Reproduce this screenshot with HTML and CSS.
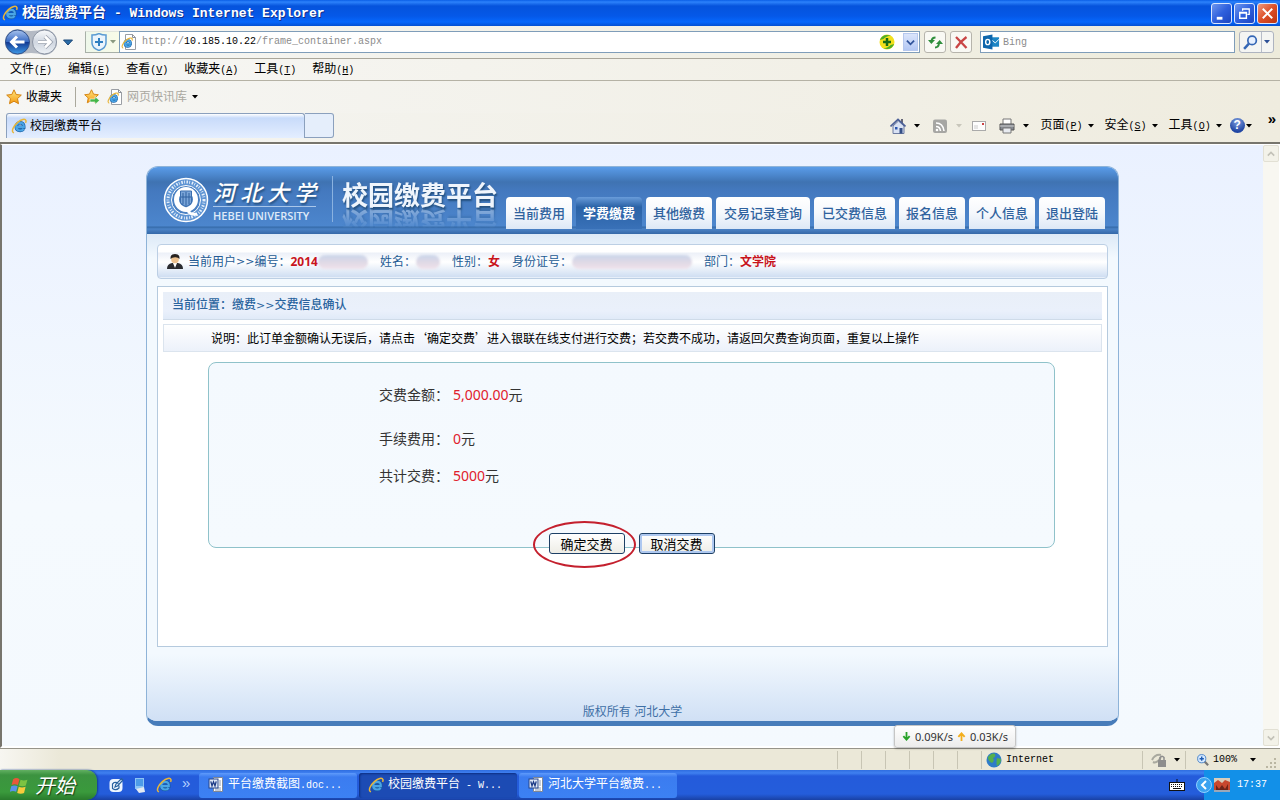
FILE: index.html
```html
<!DOCTYPE html>
<html lang="zh-CN">
<head>
<meta charset="utf-8">
<title>校园缴费平台 - Windows Internet Explorer</title>
<link rel="stylesheet" href="styles.css">
</head>
<body>
<svg class="defs" aria-hidden="true">
  <defs>
    <linearGradient id="gBlue" x1="0" y1="0" x2="0" y2="1"><stop offset="0" stop-color="#7cc8f5"/><stop offset="1" stop-color="#1a6cc4"/></linearGradient>
    <linearGradient id="gBack" x1="0" y1="0" x2="0" y2="1"><stop offset="0" stop-color="#a9c4ee"/><stop offset=".48" stop-color="#3a6cc4"/><stop offset=".52" stop-color="#123a94"/><stop offset="1" stop-color="#3f9be8"/></linearGradient>
    <linearGradient id="gFwd" x1="0" y1="0" x2="0" y2="1"><stop offset="0" stop-color="#fafbfc"/><stop offset=".5" stop-color="#cfd6e0"/><stop offset="1" stop-color="#eef2f6"/></linearGradient>
    <linearGradient id="gStar" x1="0" y1="0" x2="0" y2="1"><stop offset="0" stop-color="#ffe680"/><stop offset="1" stop-color="#f59a10"/></linearGradient>
    <symbol id="ie" viewBox="0 0 16 16">
      <path d="M5.500 9.200h7.300c.2-3-1.200-4.400-3.600-4.400-2.400 0-4 1.600-4 3.800 0 2.400 1.500 3.900 4 3.900 1.600 0 2.700-.6 3.400-1.700" fill="none" stroke="#175a9e" stroke-width="3.400"/>
      <path d="M5.500 9.200h7.300c.2-3-1.200-4.400-3.600-4.400-2.400 0-4 1.600-4 3.800 0 2.400 1.500 3.900 4 3.900 1.600 0 2.700-.6 3.400-1.700" fill="none" stroke="#4aa5e6" stroke-width="2.200"/>
      <path d="M3 14.900c-3.400-1-.6-7 3.700-10.600C10.200 1.300 14.200.5 14.900 2.400c.3.900.1 1.600-.4 2.400" fill="none" stroke="#e8b63a" stroke-width="1.500"/>
    </symbol>
    <symbol id="iepage" viewBox="0 0 16 16">
      <path d="M4.500.5h7l3 3v12h-10z" fill="#fff" stroke="#9a9ea4"/><path d="M11.500.5v3h3" fill="none" stroke="#8b8f96"/>
      <use href="#ie" x="0" y="3" width="12" height="12"/>
    </symbol>
    <symbol id="star" viewBox="0 0 16 16"><path d="M8 .8l2.200 4.700 5.100.6-3.800 3.500 1 5.100L8 12.200l-4.500 2.500 1-5.100L.7 6.100l5.100-.6z" fill="url(#gStar)" stroke="#d48311"/></symbol>
    <symbol id="word" viewBox="0 0 16 16">
      <path d="M5.500.5h9v14h-9z" fill="#fff" stroke="#7f8794"/><path d="M11 4h2M11 6h2M11 8h2M7 11h6M7 13h6" stroke="#8998b0"/>
      <rect x="1" y="2" width="9" height="9" fill="#dfe7f6" stroke="#26478d"/><path d="M2.800 4.300l1.200 4.500 1.500-4 1.500 4 1.200-4.500" fill="none" stroke="#1c3a86" stroke-width="1.300"/>
    </symbol>
    <symbol id="down" viewBox="0 0 6 4"><path d="M0 0h6L3 3.500z" fill="currentColor"/></symbol>
  </defs>
</svg>

<header class="titlebar">
  <svg class="i16"><use href="#ie"/></svg>
  <h1>校园缴费平台 <span class="mono">- Windows Internet Explorer</span></h1>
  <div class="winbtns">
    <button type="button" class="win" aria-label="最小化"><svg viewBox="0 0 20 20"><path d="M5 15h6" stroke="#fff" stroke-width="3"/></svg></button>
    <button type="button" class="win" aria-label="还原"><svg viewBox="0 0 20 20"><path d="M8 7V5h7v6h-2M8 5.500h7" fill="none" stroke="#fff" stroke-width="1.300"/><path d="M5 9h7v6H5zM5 9.500h7" fill="none" stroke="#fff" stroke-width="1.500"/></svg></button>
    <button type="button" class="win close" aria-label="关闭"><svg viewBox="0 0 20 20"><path d="M5 5l10 10M15 5L5 15" stroke="#fff" stroke-width="2"/></svg></button>
  </div>
</header>

<div class="navrow">
  <svg class="backfwd" viewBox="0 0 54 28">
    <path d="M14 1q13 4 26 0a13 13 0 0 1 0 26q-13-4-26 0a13 13 0 0 1 0-26z" fill="#b4bac4"/>
    <circle cx="13.500" cy="14" r="12" fill="url(#gBack)" stroke="#32528c"/><circle cx="40.500" cy="14" r="12" fill="url(#gFwd)" stroke="#8a93a2"/>
    <path d="M20.500 14H8M13 8.500L7.500 14l5.500 5.500" fill="none" stroke="#fff" stroke-width="3"/>
    <path d="M34 14h12M41 8.500l5.500 5.500-5.500 5.500" fill="none" stroke="#98a0ac" stroke-width="4"/><path d="M34 14h12M41 8.500l5.500 5.500-5.500 5.500" fill="none" stroke="#fff" stroke-width="2.500"/>
  </svg>
  <svg class="histarrow" viewBox="0 0 10 7"><path d="M.5 1h9L5 6z" fill="#2a6ca8" stroke="#1c4878"/></svg>
  <div class="shield">
    <svg viewBox="0 0 16 18"><path d="M1 2q4 0 7-1.500Q11 2 15 2v8q0 5-7 7.500Q1 15 1 10z" fill="#eaf4fc" stroke="#5b9bd2" stroke-width="1.500"/><path d="M8 5v8M4 9h8" stroke="#2f7fc0" stroke-width="2"/></svg>
    <svg class="caret"><use href="#down"/></svg>
  </div>
  <div class="address">
    <svg class="i16"><use href="#iepage"/></svg>
    <div class="url mono" role="textbox" aria-label="地址">http://<b>10.185.10.22</b>/frame_container.aspx</div>
    <svg class="i16" viewBox="0 0 16 16"><circle cx="8" cy="8" r="7.500" fill="#f3e01c"/><path d="M.8 6Q4-1 12 1.700 7 2 4.500 5zM15.200 10q-3 7-11 4.300 5-.3 7.500-3.300z" fill="#4fae28"/><path d="M8 4v8M4 8h8" stroke="#176b17" stroke-width="2.500"/></svg>
    <button type="button" class="drop" aria-label="展开地址"><svg viewBox="0 0 10 10"><path d="M1 3l4 4 4-4" fill="none" stroke="#31549b" stroke-width="2"/></svg></button>
  </div>
  <button type="button" class="tool" aria-label="刷新"><svg viewBox="0 0 16 16"><path d="M8.500 3.500Q5 3.500 4.500 7M8 13.500q3.500 0 4-4" fill="none" stroke="#2f8f3c" stroke-width="2"/><path d="M1 6h7L4.300 10zM9 10l3.700-4L16 10z" fill="#2f8f3c"/></svg></button>
  <button type="button" class="tool" aria-label="停止"><svg viewBox="0 0 16 16"><path d="M3 3q5 5 10.500 11M13.500 3Q8 7 3 14" fill="none" stroke="#c94545" stroke-width="2.300"/></svg></button>
  <div class="search">
    <svg viewBox="0 0 18 16"><path d="M8 3h9v10H8z" fill="#1d86c5"/><path d="M9.500 6l3.500 3 4-4" fill="none" stroke="#fff"/><path d="M0 2l10-2v16L0 14z" fill="#0f67ad"/><ellipse cx="5" cy="8" rx="2.200" ry="2.800" fill="none" stroke="#fff" stroke-width="1.500"/></svg>
    <input type="text" class="mono" placeholder="Bing" aria-label="Bing">
  </div>
  <div class="searchbtns">
    <button type="button" aria-label="搜索"><svg viewBox="0 0 16 16"><circle cx="9.500" cy="6" r="4" fill="#e6f0ff" stroke="#3567b5" stroke-width="1.600"/><path d="M6.500 9L2 14" stroke="#3567b5" stroke-width="2.300"/></svg></button>
    <button type="button" class="narrow" aria-label="搜索选项"><svg class="caret"><use href="#down"/></svg></button>
  </div>
</div>

<nav class="menurow" aria-label="菜单">
  <a href="#">文件<span class="mono">(<u>F</u>)</span></a>
  <a href="#">编辑<span class="mono">(<u>E</u>)</span></a>
  <a href="#">查看<span class="mono">(<u>V</u>)</span></a>
  <a href="#">收藏夹<span class="mono">(<u>A</u>)</span></a>
  <a href="#">工具<span class="mono">(<u>T</u>)</span></a>
  <a href="#">帮助<span class="mono">(<u>H</u>)</span></a>
</nav>

<div class="favrow">
  <svg class="i16"><use href="#star"/></svg><a href="#">收藏夹</a>
  <span class="vsep"></span>
  <svg class="i16" viewBox="0 0 16 16"><use href="#star" width="15" height="15"/><path d="M6 10h5V7.500l4.500 4-4.500 4V13H6z" fill="#43b649" stroke="#fff" stroke-width=".6"/></svg>
  <svg class="i16 feed"><use href="#iepage"/></svg>
  <a href="#" class="muted">网页快讯库</a><svg class="caret"><use href="#down"/></svg>
</div>

<div class="tabrow">
  <div class="tab"><svg class="i16"><use href="#ie"/></svg>校园缴费平台</div>
  <button type="button" class="newtab" aria-label="新选项卡"></button>
  <div class="cmdbar">
    <svg class="i16" viewBox="0 0 16 16"><path d="M11 1h2v4h-2z" fill="#667"/><path d="M3 8v7.500h11V8L8.500 3z" fill="#d9e2f4" stroke="#6d7ba0"/><path d="M.5 8.500L8 1.500l7.500 7" fill="none" stroke="#4a5f96" stroke-width="1.700"/><path d="M5 9h2.500v2.500H5z" fill="#2b57b0"/><path d="M9.500 10h3v5.500h-3z" fill="#344f86"/></svg>
    <svg class="caret"><use href="#down"/></svg>
    <svg class="i16 rss" viewBox="0 0 16 16"><rect x="1" y="1.500" width="14" height="13.500" rx="2" fill="#a6a6a3"/><path d="M4 5q7 0 8 8M4 8.500q4 0 4.500 4.500" fill="none" stroke="#fff" stroke-width="1.600"/><circle cx="5" cy="12" r="1.300" fill="#fff"/></svg>
    <svg class="caret pale"><use href="#down"/></svg>
    <svg class="i16 mail" viewBox="0 0 16 16"><rect x="1.500" y="3.500" width="13" height="9" fill="#fdfdfd" stroke="#aaa"/><path d="M3 10h4M3 8h4" stroke="#ccc"/><rect x="11" y="5" width="2" height="2" fill="#c44"/></svg>
    <svg class="i16 print" viewBox="0 0 16 16"><path d="M4 1h8v6H4z" fill="#fff" stroke="#777"/><path d="M1 6h14v6H1z" fill="#858a92" stroke="#555"/><path d="M4 10h8v5H4z" fill="#e8ebf0" stroke="#777"/><path d="M1 8h14" stroke="#ccc"/></svg>
    <svg class="caret"><use href="#down"/></svg>
    <a href="#" class="cmd"><span>页面<span class="mono">(<u>P</u>)</span></span><svg class="caret"><use href="#down"/></svg></a>
    <a href="#" class="cmd"><span>安全<span class="mono">(<u>S</u>)</span></span><svg class="caret"><use href="#down"/></svg></a>
    <a href="#" class="cmd"><span>工具<span class="mono">(<u>O</u>)</span></span><svg class="caret"><use href="#down"/></svg></a>
    <button type="button" class="help" aria-label="帮助"><span>?</span><svg class="caret"><use href="#down"/></svg></button>
    <span class="more">»</span>
  </div>
</div>

<div class="viewport">
  <main class="canvas">
    <div class="portal">
      <div class="banner">
        <svg class="crest" viewBox="0 0 46 46" aria-label="河北大学校徽">
          <circle cx="23" cy="23" r="21.500" fill="#5f95d4" stroke="#fff" stroke-width="1.500"/>
          <circle cx="23" cy="23" r="18" fill="none" stroke="#e6effa" stroke-width="3" stroke-dasharray="1.500 1.300 .8 1.700"/>
          <circle cx="23" cy="23" r="14.500" fill="#4a80c2" stroke="#fff" stroke-width="1"/>
          <ellipse cx="23" cy="22.500" rx="9.500" ry="10" fill="none" stroke="#fff" stroke-width="5"/>
          <path d="M17.500 14h11v12l-5.500 4-5.500-4z" fill="#7aa5d8" stroke="#3b6eae"/><path d="M20 16v11M23 15v14M26 16v11M18 20h10" stroke="#2e609f"/>
          <path d="M18 31q6 1 8 4t8 2" fill="none" stroke="#fff" stroke-width="3"/>
        </svg>
        <div class="univ"><span class="cn">河北大学</span><span class="en">HEBEI UNIVERSITY</span></div>
        <div class="platform"><span>校园缴费平台</span></div>
        <nav class="tabs">
          <a href="#">当前费用</a>
          <a href="#" class="on">学费缴费</a>
          <a href="#">其他缴费</a>
          <a href="#" class="wide">交易记录查询</a>
          <a href="#" class="wide">已交费信息</a>
          <a href="#">报名信息</a>
          <a href="#">个人信息</a>
          <a href="#">退出登陆</a>
        </nav>
      </div>
      <div class="content">
        <div class="userbar">
          <svg class="i16" viewBox="0 0 16 16"><path d="M0 15q0-5 5-6h6q5 1 5 6z" fill="#2b2b2f"/><path d="M6 9h4l-2 5z" fill="#fff"/><circle cx="8" cy="5.500" r="3.800" fill="#eec28f"/><path d="M3.500 5Q3 0 8 0t4.500 5Q11 3 8 3.200T3.500 5z" fill="#26211f"/></svg>
          <span class="who">当前用户<span class="gt">&gt;&gt;</span>编号：<b>2014</b><i class="blot w50"></i></span>
          <span>姓名：<i class="blot w24"></i></span>
          <span>性别：<b>女</b></span>
          <span>身份证号：<i class="blot w120"></i></span>
          <span>部门：<b>文学院</b></span>
        </div>
        <section class="panel">
          <h2>当前位置：缴费<span class="gt">&gt;&gt;</span>交费信息确认</h2>
          <p class="note">说明：此订单金额确认无误后，请点击‘确定交费’进入银联在线支付进行交费；若交费不成功，请返回欠费查询页面，重复以上操作</p>
          <form class="order">
            <dl>
              <div class="first"><dt>交费金额：</dt><dd><em>5,000.00</em>元</dd></div>
              <div><dt>手续费用：</dt><dd><em>0</em>元</dd></div>
              <div><dt>共计交费：</dt><dd><em>5000</em>元</dd></div>
            </dl>
            <div class="actions">
              <span class="marked"><button type="button">确定交费</button></span>
              <button type="button" class="focus">取消交费</button>
            </div>
          </form>
        </section>
        <footer>版权所有 河北大学</footer>
      </div>
    </div>
  </main>
  <div class="scroll" aria-hidden="true">
    <span><svg viewBox="0 0 10 10"><path d="M1 7l4-4 4 4" fill="none" stroke="#c3c2b8" stroke-width="2"/></svg></span>
    <span><svg viewBox="0 0 10 10"><path d="M1 3l4 4 4-4" fill="none" stroke="#c3c2b8" stroke-width="2"/></svg></span>
  </div>
  <div class="speed">
    <svg viewBox="0 0 10 10"><path d="M5 0v8M1.500 4.500L5 8.500l3.500-4" fill="none" stroke="#28a228" stroke-width="2"/></svg><span>0.09K/s</span>
    <svg viewBox="0 0 10 10"><path d="M5 10V2M1.500 5.500L5 1.500l3.500 4" fill="none" stroke="#f3ae1c" stroke-width="2"/></svg><span>0.03K/s</span>
  </div>
</div>

<div class="status">
  <span class="cell"></span><span class="cell"></span><span class="cell"></span><span class="cell"></span><span class="cell"></span><span class="cell"></span>
  <span class="cell zone"><svg class="i16" viewBox="0 0 16 16"><circle cx="8" cy="8" r="7.500" fill="#2f7cc8"/><path d="M2 5q4-5 7-3 1 3-2 4 2 3-1 5-4-2-4-6zM11 6l4 1q0 5-4 7-1-3 0-8z" fill="#55b04d"/></svg><span class="mono">Internet</span></span>
  <span class="cell lock"><svg class="i16" viewBox="0 0 16 16"><path d="M1 8q3-6 9-5M2 10q4 2 8-5" fill="none" stroke="#a9a99f" stroke-width="2"/><path d="M7 8h8v7H7z" fill="#8d8d8d"/><path d="M9 8V5.500q2-2.500 4 0V8" fill="none" stroke="#8d8d8d" stroke-width="1.500"/></svg><svg class="caret"><use href="#down"/></svg></span>
  <span class="cell zoomcell"><svg viewBox="0 0 14 14"><path d="M8 8l5 5" stroke="#777" stroke-width="2.500"/><circle cx="5.500" cy="5.500" r="4.800" fill="#d6e9ff" stroke="#3a78c4"/><path d="M5.500 3v5M3 5.500h5" stroke="#1c5cb4" stroke-width="1.600"/></svg><span class="mono">100%</span><svg class="caret"><use href="#down"/></svg>
  <svg class="grip" viewBox="0 0 12 12"><path d="M9 1h2v2H9zM5 5h2v2H5zM9 5h2v2H9zM1 9h2v2H1zM5 9h2v2H5zM9 9h2v2H9z" fill="#bab6a2"/></svg></span>
</div>

<div class="taskbar">
  <button type="button" class="start"><svg viewBox="0 0 18 18"><path d="M3 3q3-2 6 0L7.500 8.500q-3-1.500-6 0z" fill="#e8583a"/><path d="M10 3.500q3 1.500 6.500 0L15 9q-3 1.500-6.500 0z" fill="#7cc342"/><path d="M1.200 9.700q3-1.500 6 0L5.800 15q-3-1.500-6 0z" fill="#5a92ea"/><path d="M8.300 10.200q3 1.500 6.500 0L13.300 16q-3 1.500-6.500 0z" fill="#f8cb3c"/></svg>开始</button>
  <div class="quick">
    <svg class="i16" viewBox="0 0 16 16"><rect x="1.500" y="2" width="13" height="13" rx="4" fill="#eef6ff"/><path d="M10.500 6.500Q9 5 6 5.500L4.500 7v4.500Q8 14 11 11V8.500M7 10l1-3 5.500-5.500 1.500 1.500L9.500 9z" fill="none" stroke="#28629f" stroke-width="1.200"/></svg>
    <svg class="i16" viewBox="0 0 16 16"><path d="M3 1h9v11H3z" fill="#8cc4f5"/><path d="M4 2h7v7H4z" fill="#4d9be8"/><path d="M4 12l8-2 1 5-6 1z" fill="#e4eaf2"/></svg>
    <svg class="i16"><use href="#ie"/></svg>
    <span>»</span>
  </div>
  <div class="tasks">
    <button type="button"><svg class="i16"><use href="#word"/></svg><span>平台缴费截图<span class="mono">.doc...</span></span></button>
    <button type="button" class="active"><svg class="i16"><use href="#ie"/></svg><span>校园缴费平台<span class="mono"> - W...</span></span></button>
    <button type="button"><svg class="i16"><use href="#word"/></svg><span>河北大学平台缴费<span class="mono">...</span></span></button>
  </div>
  <svg class="i16 kbd" viewBox="0 0 16 16"><path d="M8 5V2" stroke="#111"/><rect x=".5" y="5.500" width="15" height="8" fill="#fff" stroke="#111"/><path d="M2 7.500h12M2 9.500h12" stroke="#111" stroke-dasharray="1 1"/><path d="M4 11.500h8" stroke="#111"/></svg>
  <div class="tray">
    <svg class="i16" viewBox="0 0 16 16"><circle cx="8" cy="8" r="7.500" fill="#3aa2f0" stroke="#8fd0ff"/><path d="M10 4L6 8l4 4" fill="none" stroke="#fff" stroke-width="2"/></svg>
    <svg class="i16" viewBox="0 0 16 16"><path d="M0 1h16v14H0z" fill="#c8482e"/><path d="M0 1h16v4L11 3 8 6 4 3 0 6z" fill="#d9cdbb"/><path d="M2 8l3 4 3-4 3 4 3-5v6H2z" fill="#6e2418"/><path d="M0 13h16v2H0z" fill="#9aa7b8"/></svg>
    <time class="mono">17:37</time>
  </div>
</div>
</body>
</html>
```
FILE: styles.css
```css
* { box-sizing: border-box; }
body {
  margin: 0;
  height: 100vh;
  display: flex;
  flex-direction: column;
  overflow: hidden;
  background: #efeddf;
  color: #000;
  font: 12px/16px "Liberation Sans", "Noto Sans CJK SC", sans-serif;
}
a { color: inherit; text-decoration: none; white-space: nowrap; }
button { font: inherit; color: inherit; padding: 0; border: 0; background: none; }
svg { display: block; flex: none; }
b { font-weight: bold; }
.defs { position: absolute; width: 0; height: 0; }
.mono { font-family: "Liberation Mono", monospace; font-size: 10px; }
.i16 { width: 16px; height: 16px; }
.caret { width: 6px; height: 4px; }

.titlebar {
  flex: none;
  display: flex;
  align-items: center;
  gap: 4px;
  height: 26px;
  padding: 0 2px;
  color: #fff;
  background: linear-gradient(#0a5fe6 0, #2c82fb 2px, #0553dc 6px, #0558e8 16px, #0667fc 22px, #0450d2);
}
.titlebar h1 { flex: 1; margin: 0; font-size: 14px; line-height: 20px; text-shadow: 1px 1px 0 #10308c; }
.titlebar .mono { font-size: 13px; margin-left: 4px; }
.winbtns { display: flex; gap: 2px; }
.win { width: 21px; height: 21px; border: 1px solid #dbe7ff; border-radius: 3px; background: linear-gradient(135deg, #6e96ee, #2f60dd 50%, #1c45c0); }
.win.close { background: linear-gradient(135deg, #f0997c, #dd4f28 50%, #bb3511); }

.navrow {
  flex: none;
  display: flex;
  align-items: center;
  height: 33px;
  padding: 0 6px 0 4px;
  border-bottom: 1px solid #aaa69a;
  background: linear-gradient(90deg, #f6f6f4, #edebdb);
}
.backfwd { width: 54px; height: 28px; }
.histarrow { width: 10px; height: 7px; margin: 0 12px 0 5px; }
.shield { display: flex; align-items: center; gap: 3px; width: 34px; height: 22px; padding-left: 5px; color: #8a9a80; background: linear-gradient(90deg, #eef7ea, #f8fbe8); border: 1px solid #a8b0a8; border-right: 0; border-top-color: #e0e4dc; }
.shield svg:first-child { width: 16px; height: 18px; }
.address { flex: 1; display: flex; align-items: center; gap: 4px; height: 22px; padding-left: 1px; border: 1px solid #7f9db9; background: #fff; }
.url { flex: 1; color: #8c8c8c; padding-left: 1px; }
.url b { color: #000; font-weight: normal; }
.drop { width: 15px; height: 18px; margin: 0 1px 0 4px; padding: 3px 2px; background: linear-gradient(#dbe5fb, #b4c8f4); border: 1px solid #b6c8ee; }
.tool { width: 22px; height: 22px; margin-left: 4px; padding: 2px; border: 1px solid #b6b4ac; border-radius: 3px; background: #f9f9f4; }
.search { display: flex; align-items: center; gap: 3px; width: 255px; height: 22px; margin-left: 8px; padding-left: 2px; border: 1px solid #7f9db9; background: #fff; }
.search svg { width: 17px; height: 16px; }
.search input { flex: 1; min-width: 0; padding: 0; border: 0; outline: 0; background: none; }
.search input::placeholder { color: #8c8c8c; opacity: 1; }
.searchbtns { display: flex; height: 22px; margin-left: 4px; border: 1px solid #aeb4c0; border-radius: 3px; background: #f4f5f3; color: #2c4f96; }
.searchbtns button { width: 21px; padding: 2px; }
.searchbtns .narrow { width: 12px; border-left: 1px solid #b6bcc8; }

.menurow { flex: none; display: flex; align-items: center; gap: 16px; height: 22px; padding: 0 10px; border-bottom: 1px solid #b5b2a5; background: linear-gradient(90deg, #f7f7f5, #efecdf); }
.favrow { flex: none; display: flex; align-items: center; height: 32px; padding: 0 6px; background: linear-gradient(90deg, #f6f6f4, #efecdf); }
.favrow a { margin-left: 4px; }
.favrow .caret { margin-left: 5px; }
.favrow .feed { margin-left: 7px; }
.muted { color: #aaa8a0; }
.vsep { width: 1px; height: 20px; margin: 0 8px 0 13px; background: #aaa89c; }

.tabrow { flex: none; display: flex; align-items: flex-end; height: 31px; padding: 0 4px 4px 6px; border-bottom: 2px solid #77756d; background: linear-gradient(90deg, #f5f5f2, #efecdf); }
.tab { display: flex; align-items: center; gap: 3px; width: 299px; height: 25px; padding-left: 4px; border: 1px solid #8ba0bd; border-bottom: 0; border-radius: 3px 3px 0 0; background: linear-gradient(#fff 0, #c8dbfa 4px, #e4eeff); }
.newtab { width: 29px; height: 25px; border: 1px solid #8ba0bd; border-left: 0; border-radius: 0 3px 3px 0; background: #e5eefb; }
.cmdbar { display: flex; align-items: center; height: 25px; margin-left: auto; gap: 8px; }
.cmdbar .rss { margin-left: 4px; }
.cmdbar .mail { margin-left: 1px; }
.cmdbar .print { margin-left: 4px; }
.cmdbar .pale { color: #c8c6bb; }
.cmd { display: flex; align-items: center; gap: 5px; margin-left: 3px; }
.help { display: flex; align-items: center; gap: 1px; }
.help span { width: 15px; height: 15px; border-radius: 50%; color: #fff; font: bold 12px/15px "Liberation Sans", sans-serif; background: radial-gradient(circle at 50% 25%, #7fa0e0, #2247a4 70%); }
.more { align-self: flex-start; margin-left: 8px; font: bold 15px/12px "Liberation Sans", sans-serif; }

.viewport { position: relative; flex: 1; min-height: 0; display: flex; border: solid #fff; border-width: 1px 1px 2px 2px; border-left-color: #77756d; }
.canvas { flex: 1; overflow: hidden; background: linear-gradient(#eaf1ff, #f5fafe 60%, #f4f9fe); }
.scroll { width: 16px; display: flex; flex-direction: column; justify-content: space-between; background: #f8f7f1; }
.scroll span { height: 17px; padding: 4px 3px; border: 1px solid #e2e0d4; border-radius: 2px; background: #f3f2e9; }

.portal { max-width: 973px; margin: 21px auto 0; border: 1px solid #8eb3d8; border-bottom: 5px solid #477cba; border-radius: 12px; overflow: hidden; background: #f3f9fe; }
.banner { display: flex; height: 67px; padding: 0 13px 5px 16px; background: linear-gradient(#5a9ce8 0, #4c87cd 8px, #3f73b2 15px, #4479bf 24px, #4c86cd 59px, #356aa8 60px, #4a82c6 62px, #3468a8); color: #fff; }
.crest { width: 46px; height: 46px; margin-top: 10px; }
.univ { display: flex; flex-direction: column; width: 103px; margin: 8px 0 0 4px; }
.cn { display: block; height: 32px; border-bottom: 1px solid #a9c7ea; font: italic 500 22px/32px "Noto Sans CJK SC", sans-serif; text-align-last: justify; text-shadow: 1px 2px 2px #24507e; white-space: nowrap; }
.en { font: 600 11px/18px "Open Sans", sans-serif; white-space: nowrap; color: #dfeaf8; }
.platform { margin: 9px 0 0 16px; padding: 0 3px 0 9px; height: 46px; border-left: 1px solid #8ab2e0; font: bold 26px/36px "Noto Sans CJK SC", sans-serif; text-shadow: 1px 2px 2px #24507e; color: #eff5fc; white-space: nowrap; }
.platform span { display: block; -webkit-box-reflect: below -7px linear-gradient(transparent 35%, #0007); }
.tabs { display: flex; align-items: flex-end; gap: 4px; margin-left: auto; font: 500 13px/31px "Noto Sans CJK SC", sans-serif; color: #2f629e; }
.tabs a { height: 32px; padding: 0 7px; border-radius: 4px 4px 0 0; background: linear-gradient(#fff, #f5f8fc 50%, #dde8f6); }
.tabs .wide { padding: 0 8px; }
.tabs .on { color: #fff; font-weight: bold; background: linear-gradient(#699cda, #2a62a6 10px, #3971b8); }
.content { padding: 10px; background: linear-gradient(#dce9f7, #f3f9fe 24px, #f3f9fe 420px, #d0e0f5); }
.userbar { display: flex; align-items: center; gap: 12px; height: 35px; padding-left: 9px; border: 1px solid #bccfe4; border-radius: 4px; color: #245b94; background: linear-gradient(#fff 0, #fff 7px, #ecf0f8 8px, #fff 17px, #cfdef2 32px, #fff); }
.userbar span { display: flex; align-items: center; white-space: nowrap; }
.userbar .who { margin-left: -7px; }
.userbar b { color: #c8141c; font-family: "Noto Sans", "Noto Sans CJK SC", sans-serif; }
.gt { font-family: "DejaVu Sans", sans-serif; font-size: 11px; }
.blot { height: 14px; border-radius: 7px; background: linear-gradient(#c9d5ea, #dfd9e6 50%, #f0e2ea); filter: blur(1px); }
.w50 { width: 50px; }
.w24 { width: 24px; }
.w120 { width: 120px; }
.panel { min-height: 361px; margin-top: 7px; padding: 5px; border: 1px solid #b5cade; background: #fff; }
.panel h2 { margin: 0; padding: 0 9px; border-bottom: 1px solid #cfdbe9; font-size: 12px; line-height: 26px; font-weight: 500; color: #2a649e; background: linear-gradient(#e9eff8, #eaf0fb 70%, #e0eaf8); }
.note { margin: 4px 0 10px; padding: 0 47px; border: 1px solid #dbe4ee; font-family: "Noto Sans CJK SC", sans-serif; line-height: 26px; white-space: nowrap; background: linear-gradient(#fff, #ecf1fa); }
.order { height: 186px; margin: 0 47px 0 45px; border: 1px solid #8fc2ca; border-radius: 8px; background: linear-gradient(#f4f9fe, #f5fafe); color: #333; font-size: 14px; display: flex; flex-direction: column; }
.order dl { flex: 1; margin: 0; padding: 22px 0 0 170px; font-family: "Noto Sans", "Noto Sans CJK SC", sans-serif; }
.order dl div { display: flex; gap: 4px; line-height: 20px; margin-bottom: 17px; }
.order .first { margin-bottom: 24px; }
.order dd { margin: 0; }
.order em { font-style: normal; color: #e0202c; }
.actions { display: flex; gap: 14px; justify-content: center; margin-bottom: -7px; }
.actions button { width: 76px; height: 21px; border: 1px solid #1d4066; border-radius: 3px; color: #000; font: 13px/17px "Noto Sans CJK SC", sans-serif; background: linear-gradient(#fff, #eeede6); }
.actions .focus { box-shadow: inset 0 0 0 2px #aec8f0; }
.marked { position: relative; display: flex; }
.marked::after { content: ""; position: absolute; inset: -12px -11px -14px -16px; border: 2px solid #c4202e; border-radius: 50%; pointer-events: none; }
footer { height: 17px; margin: 57px 0 -10px; line-height: 16px; text-align: center; color: #3f70a6; }

.speed { position: absolute; right: 263px; bottom: -2px; display: flex; align-items: center; gap: 4px; height: 23px; padding: 0 7px; border: 1px solid #c6c6c6; border-radius: 3px; color: #333; font: 11px/16px "Noto Sans", sans-serif; background: linear-gradient(#fff, #ececec); box-shadow: 0 1px 2px #0004; }
.speed svg { width: 9px; height: 9px; }

.status { flex: none; display: flex; justify-content: flex-end; height: 22px; border-top: 1px solid #96948a; background: linear-gradient(90deg, #f7f6f1, #ebe8d8 60px); }
.cell { display: flex; align-items: center; gap: 4px; width: 24px; margin: 2px 0 1px; border-left: 1px solid #c8c5b4; }
.zone { width: 161px; padding-left: 4px; }
.lock { width: 43px; padding-left: 8px; gap: 7px; }
.zoomcell { width: 95px; padding: 0 1px 0 11px; }
.zoomcell > svg:first-child { width: 12px; height: 14px; }
.zoomcell .caret { margin: 0 5px 0 9px; }
.zoomcell .grip { width: 12px; height: 12px; align-self: flex-end; }

.taskbar { flex: none; display: flex; align-items: center; height: 30px; color: #fff; background: linear-gradient(#2f6de0 0, #3f80f0 3px, #245bdb 6px, #245ddb 24px, #1941a5); }
.start { display: flex; align-items: center; gap: 6px; width: 97px; height: 30px; padding-left: 10px; border-radius: 0 10px 10px 0; font: italic 20px/24px "Noto Sans CJK SC", sans-serif; text-shadow: 1px 1px 1px #173f17; background: linear-gradient(#62b062 0, #3c9340 5px, #3a9a3c 22px, #297a2c); box-shadow: 1px 0 2px #123c90; }
.start svg { width: 19px; height: 19px; }
.quick { display: flex; align-items: center; gap: 8px; width: 102px; padding-left: 11px; }
.quick span { align-self: flex-start; font-size: 15px; line-height: 12px; color: #b6d2ff; margin-left: 2px; }
.tasks { flex: 1; display: flex; gap: 2px; }
.tasks button { display: flex; align-items: center; gap: 4px; width: 158px; height: 25px; padding-left: 9px; border-radius: 3px; white-space: pre; background: linear-gradient(#5f9bfb, #3b7cf0 4px, #3c81f3); }
.tasks .active { background: #1c4bb4; box-shadow: inset 1px 1px 2px #0d2f83; }
.kbd { margin-right: 11px; }
.tray { display: flex; align-items: center; gap: 2px; height: 30px; padding-right: 13px; background: linear-gradient(90deg, transparent 8px, #1290e8 8px); }
.tray time { margin-left: 5px; }
```
